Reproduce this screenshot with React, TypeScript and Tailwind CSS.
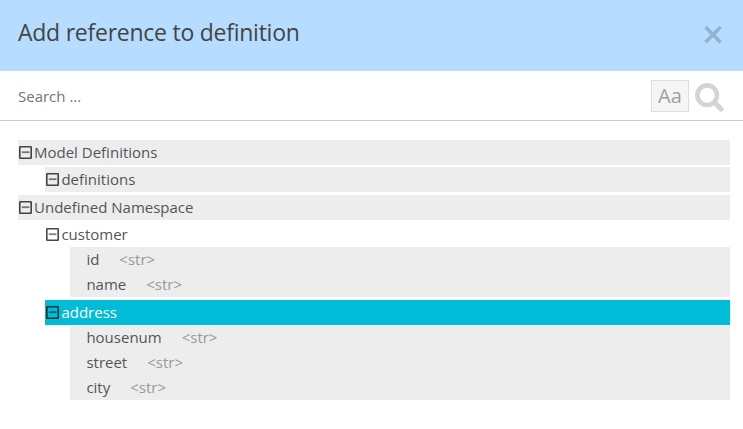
import React from "react";

function MinusBox() {
  return (
    <svg className="ml-px mr-[2px] h-[13px] w-[13px] shrink-0" viewBox="0 0 13 13" fill="none">
      <rect x="0.8" y="0.8" width="11.4" height="11.4" rx="0.5" stroke="#000" strokeOpacity="0.72" strokeWidth="1.6" />
      <path d="M2.8 6.2h7.6" stroke="#000" strokeOpacity="0.5" strokeWidth="1.8" />
    </svg>
  );
}

function Branch({ label, className }: { label: string; className: string }) {
  return (
    <div className={`flex h-[25px] items-center text-[15px] leading-[25px] ${className}`}>
      <MinusBox />
      <span>{label}</span>
    </div>
  );
}

function Field({ name }: { name: string }) {
  return (
    <div className="flex h-[25px] gap-5 bg-[#ededed] pl-[16.4px] text-[15px] leading-[25px]">
      <span>{name}</span>
      <span className="text-[#999]">&lt;str&gt;</span>
    </div>
  );
}

export default function App() {
  return (
    <div className="h-[429px] w-full overflow-hidden bg-white font-['Open_Sans',sans-serif] text-[#555]">
      <header className="flex h-[71px] items-start justify-between bg-[#b6ddff] pl-[18px] pr-[21px]">
        <h1 className="pt-[15px] text-[23px] leading-[34px] tracking-[-0.25px] text-[#444]">Add reference to definition</h1>
        <button className="mt-[25px]" aria-label="Close">
          <svg className="h-[20px] w-[18px]" viewBox="0 0 18 20" fill="none" stroke="#92b1cc" strokeWidth="3.6">
            <path d="M1.4 2.1 16.6 17.3M16.6 2.1 1.4 17.3" />
          </svg>
        </button>
      </header>
      <div className="flex h-[50px] items-center border-b border-[#ccc] pl-[18px] pr-[19px]">
        <span className="flex-1 pt-px text-[15px] text-[#757575]">Search ...</span>
        <button className="flex h-8 w-[38px] items-center justify-center border border-[#ddd] bg-[#f5f5f5] pt-px text-[20px] text-[#a0a0a0]">
          Aa
        </button>
        <svg className="ml-[6px] mt-[3px] h-[29px] w-[29px]" viewBox="0 0 29 29" fill="none" stroke="#d4d4d4">
          <circle cx="12.2" cy="12.2" r="9.8" strokeWidth="4.6" />
          <path d="M19.5 19.5 26 26" strokeWidth="5" strokeLinecap="round" />
        </svg>
      </div>
      <main className="flex flex-col pl-[18px] pr-[13px] pt-[19px]">
        <Branch label="Model Definitions" className="bg-[#ededed]" />
        <Branch label="definitions" className="ml-[27px] mt-[2px] bg-[#ededed] pl-[0.4px]" />
        <Branch label="Undefined Namespace" className="mt-[3px] bg-[#ededed]" />
        <Branch label="customer" className="ml-[27px] mt-[2px] pl-[0.4px]" />
        <div className="ml-[52px]">
          <Field name="id" />
          <Field name="name" />
        </div>
        <Branch label="address" className="ml-[27px] mt-[3px] bg-[#00bcd7] pl-[0.4px] text-white" />
        <div className="ml-[52px]">
          <Field name="housenum" />
          <Field name="street" />
          <Field name="city" />
        </div>
      </main>
    </div>
  );
}
